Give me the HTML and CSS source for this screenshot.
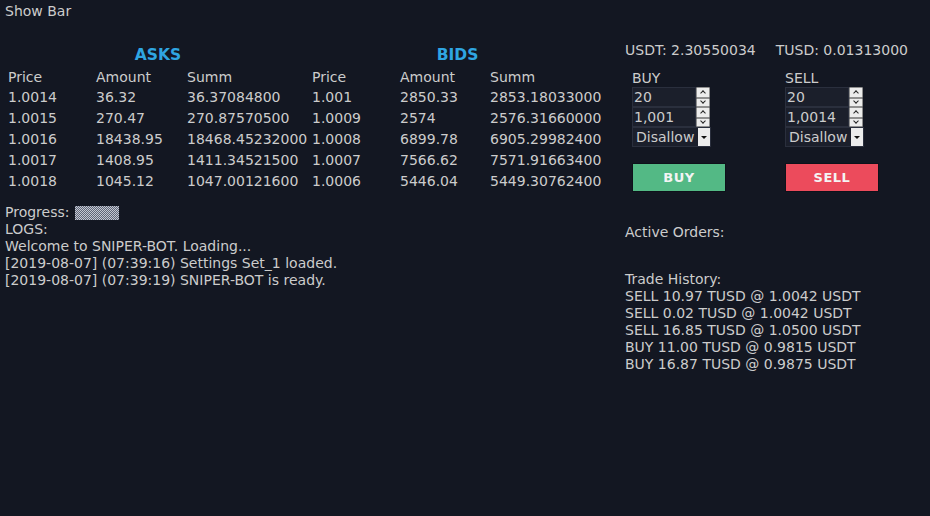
FILE: index.html
```html
<!DOCTYPE html>
<html>
<head>
<meta charset="utf-8">
<link rel="stylesheet" href="styles.css">
</head>
<body>
<div class="app">
  <div class="topbar">Show Bar</div>
  <div class="main">
    <div class="left">
      <div class="book">
        <div class="title asks">ASKS</div>
        <div class="title bids">BIDS</div>
        <div class="hd">Price</div><div class="hd">Amount</div><div class="hd">Summ</div><div class="hd">Price</div><div class="hd">Amount</div><div class="hd">Summ</div>
        <div>1.0014</div><div>36.32</div><div>36.37084800</div><div>1.001</div><div>2850.33</div><div>2853.18033000</div>
        <div>1.0015</div><div>270.47</div><div>270.87570500</div><div>1.0009</div><div>2574</div><div>2576.31660000</div>
        <div>1.0016</div><div>18438.95</div><div>18468.45232000</div><div>1.0008</div><div>6899.78</div><div>6905.29982400</div>
        <div>1.0017</div><div>1408.95</div><div>1411.34521500</div><div>1.0007</div><div>7566.62</div><div>7571.91663400</div>
        <div>1.0018</div><div>1045.12</div><div>1047.00121600</div><div>1.0006</div><div>5446.04</div><div>5449.30762400</div>
      </div>
      <div class="logs">
        <div class="progress">Progress: <span class="pbar"></span></div>
        <div>LOGS:</div>
        <div>Welcome to SNIPER-BOT. Loading...</div>
        <div>[2019-08-07] (07:39:16) Settings Set_1 loaded.</div>
        <div>[2019-08-07] (07:39:19) SNIPER-BOT is ready.</div>
      </div>
    </div>
    <div class="right">
      <div class="balances">
        <span>USDT: 2.30550034</span>
        <span>TUSD: 0.01313000</span>
      </div>
      <div class="forms">
        <div class="form">
          <div class="flabel">BUY</div>
          <div class="spin"><div class="field">20</div><div class="arrows"><span class="up"></span><span class="down"></span></div></div>
          <div class="spin"><div class="field">1,001</div><div class="arrows"><span class="up"></span><span class="down"></span></div></div>
          <div class="select"><div class="field">Disallow</div><span class="drop"></span></div>
          <button class="btn buy">BUY</button>
        </div>
        <div class="form">
          <div class="flabel">SELL</div>
          <div class="spin"><div class="field">20</div><div class="arrows"><span class="up"></span><span class="down"></span></div></div>
          <div class="spin"><div class="field">1,0014</div><div class="arrows"><span class="up"></span><span class="down"></span></div></div>
          <div class="select"><div class="field">Disallow</div><span class="drop"></span></div>
          <button class="btn sell">SELL</button>
        </div>
      </div>
      <div class="orders">Active Orders:</div>
      <div class="history">
        <div>Trade History:</div>
        <div>SELL 10.97 TUSD @ 1.0042 USDT</div>
        <div>SELL 0.02 TUSD @ 1.0042 USDT</div>
        <div>SELL 16.85 TUSD @ 1.0500 USDT</div>
        <div>BUY 11.00 TUSD @ 0.9815 USDT</div>
        <div>BUY 16.87 TUSD @ 0.9875 USDT</div>
      </div>
    </div>
  </div>
</div>
</body>
</html>
```
FILE: styles.css
```css
html, body {
  margin: 0;
  padding: 0;
  background: #131722;
  height: 100%;
}
body {
  font-family: "DejaVu Sans", sans-serif;
  font-size: 14px;
  color: #cccccc;
}
.app {
  padding: 3px 0 0 5px;
}
.topbar {
  line-height: 17px;
}
.main {
  display: flex;
  margin-top: 21px;
}
.left {
  width: 620px;
  padding-top: 5px;
}
.book {
  display: grid;
  grid-template-columns: 88px 91px 125px 88px 90px 113px;
  grid-template-rows: 21px 20px;
  grid-auto-rows: 21px;
  line-height: 21px;
  padding-left: 3px;
}
.book .hd {
  line-height: 20px;
}
.title {
  grid-column: span 3;
  align-self: start;
  text-align: center;
  font-weight: bold;
  font-size: 15.5px;
  color: #2fa6e2;
  line-height: 19px;
}
.asks {
  padding-right: 4px;
}
.logs {
  margin-top: 12px;
  line-height: 17px;
}
.progress {
  display: flex;
  align-items: center;
}
.pbar {
  display: inline-block;
  width: 44px;
  height: 14px;
  margin-left: 6px;
  background: repeating-conic-gradient(#c4c8d2 0 25%, #5f6678 0 50%) 0 0 / 2px 2px;
}
.balances {
  display: flex;
  gap: 20px;
  line-height: 18px;
}
.forms {
  display: flex;
  gap: 59px;
  padding-left: 7px;
  margin-top: 11px;
}
.form {
  width: 94px;
  display: flex;
  flex-direction: column;
}
.flabel {
  line-height: 17px;
  margin-bottom: 0;
}
.spin {
  display: flex;
  height: 20px;
}
.field {
  width: 64px;
  height: 20px;
  box-sizing: border-box;
  border: 1px solid #2a2f3d;
  background: #1b1f2b;
  line-height: 18px;
  padding-left: 1px;
  overflow: hidden;
}
.arrows {
  display: flex;
  flex-direction: column;
  width: 14px;
}
.arrows span {
  box-sizing: border-box;
  background: #ececec;
  border: 1px solid #8f8f8f;
  border-radius: 1px;
  position: relative;
}
.arrows .up {
  height: 11px;
}
.arrows .down {
  height: 9px;
}
.arrows .up::after, .arrows .down::after {
  content: "";
  position: absolute;
  left: 4px;
  width: 3px;
  height: 3px;
  border-left: 1px solid #222;
  border-top: 1px solid #222;
}
.arrows .up::after {
  top: 3px;
  transform: rotate(45deg);
}
.arrows .down::after {
  top: 0px;
  transform: rotate(225deg);
}
.select {
  display: flex;
  width: 79px;
  height: 20px;
  box-sizing: border-box;
  border: 1px solid #2a2f3d;
  background: #1b1f2b;
}
.select .field {
  width: 66px;
  border: none;
  height: 18px;
  padding-left: 3px;
  line-height: 18px;
  background: transparent;
}
.drop {
  width: 12px;
  height: 18px;
  background: #ececec;
  position: relative;
}
.drop::after {
  content: "";
  position: absolute;
  left: 3px;
  top: 8px;
  border-left: 3px solid transparent;
  border-right: 3px solid transparent;
  border-top: 3px solid #111;
}
.btn {
  margin-top: 16px;
  width: 94px;
  height: 29px;
  border: 1px solid #0e111a;
  font-family: "DejaVu Sans", sans-serif;
  font-weight: bold;
  font-size: 13px;
  letter-spacing: 0.5px;
  color: #f4f4f4;
  padding: 0;
}
.buy {
  background: #53b985;
}
.sell {
  background: #ec4b5c;
}
.orders {
  margin-top: 32px;
  line-height: 17px;
}
.history {
  margin-top: 30px;
  line-height: 17px;
}
```
